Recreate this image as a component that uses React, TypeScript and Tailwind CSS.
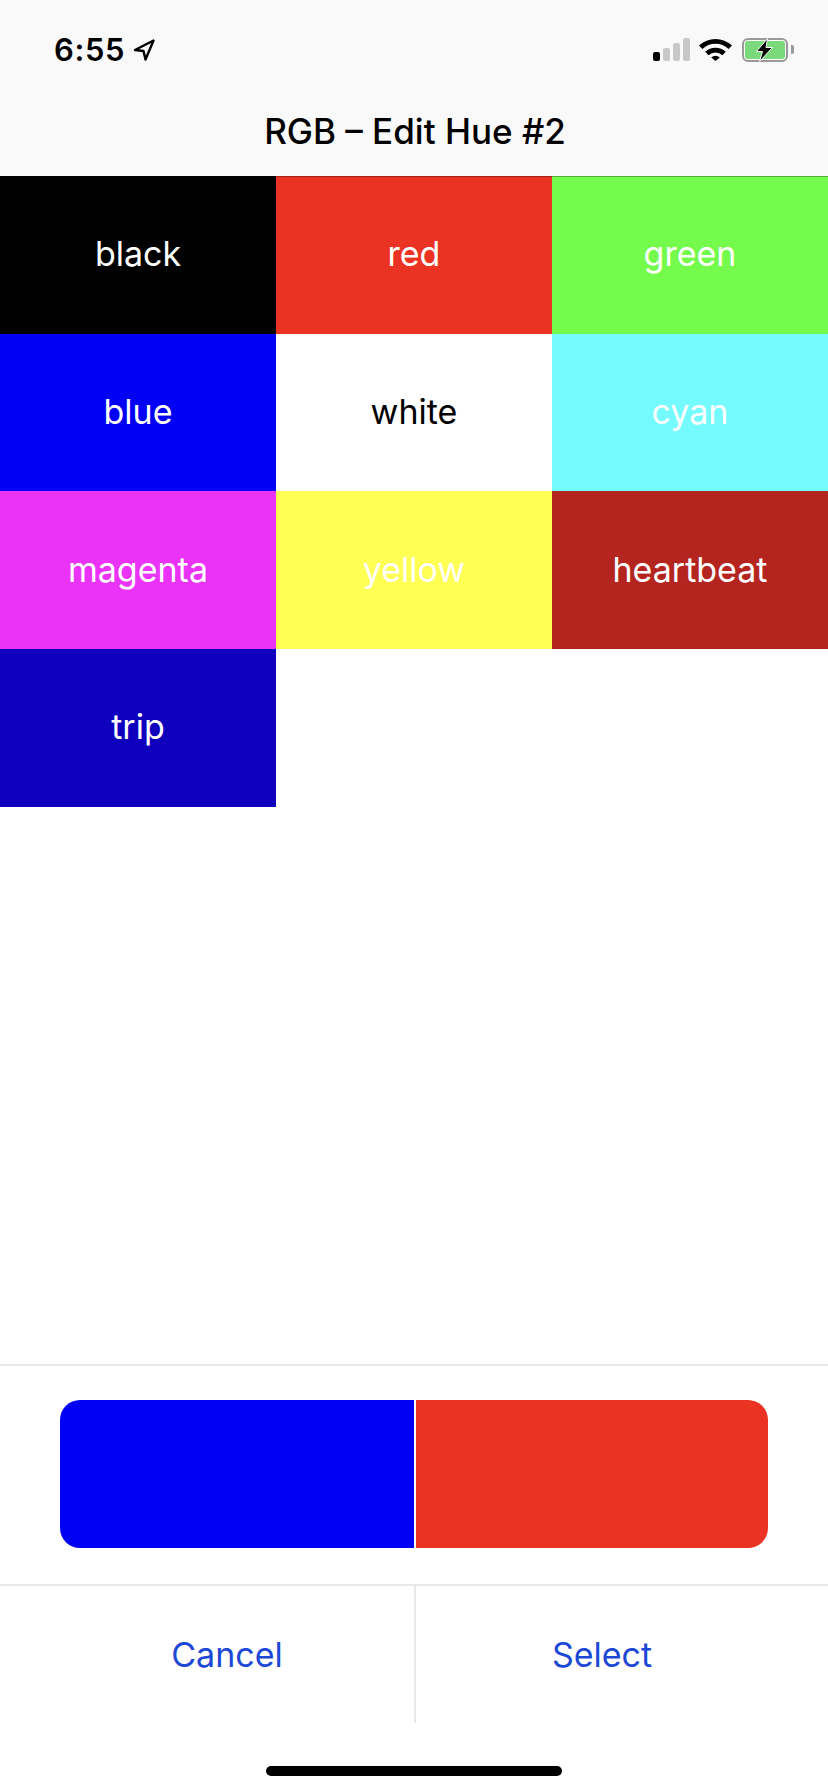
const swatches = [
  { name: "black", bg: "bg-black", text: "text-white" },
  { name: "red", bg: "bg-[#eb3323]", text: "text-white" },
  { name: "green", bg: "bg-[#75fb4c]", text: "text-white" },
  { name: "blue", bg: "bg-[#0000f5]", text: "text-white" },
  { name: "white", bg: "bg-white", text: "text-black" },
  { name: "cyan", bg: "bg-[#75fbfd]", text: "text-white" },
  { name: "magenta", bg: "bg-[#ea33f7]", text: "text-white" },
  { name: "yellow", bg: "bg-[#ffff54]", text: "text-white" },
  { name: "heartbeat", bg: "bg-[#b5251f]", text: "text-white" },
  { name: "trip", bg: "bg-[#0f00bd]", text: "text-white" },
];

const StatusBar = () => (
  <div className="flex h-[88px] items-center justify-between pl-[54px] pr-[34px] pt-[11px]">
    <div className="flex items-center gap-[8px]">
      <span className="text-[31px] font-semibold leading-none tracking-[0.6px] text-black">6:55</span>
      <svg width="22" height="22" viewBox="0 0 22 22" fill="none" stroke="black" strokeWidth="2.4" strokeLinejoin="round">
        <path d="M20.5 1.5 L2 11 L10.5 12 L12.5 20.5 Z" />
      </svg>
    </div>
    <div className="flex items-center">
      <div className="flex items-end gap-[3px]">
        <div className="h-[9px] w-[7px] rounded-[2px] bg-black" />
        <div className="h-[13px] w-[7px] rounded-[2px] bg-[#c8c8c8]" />
        <div className="h-[18px] w-[7px] rounded-[2px] bg-[#c8c8c8]" />
        <div className="h-[23px] w-[7px] rounded-[2px] bg-[#c8c8c8]" />
      </div>
      <svg width="33" height="23" viewBox="0 0 33 23" className="ml-[9px]">
        <path d="M0 7.5 A24 24 0 0 1 33 7.5 L29.6 11 A19 19 0 0 0 3.4 11 Z" fill="black" />
        <path d="M6.2 13.8 A15 15 0 0 1 26.8 13.8 L23.4 17.2 A10 10 0 0 0 9.6 17.2 Z" fill="black" />
        <path d="M12.2 19.4 A6.5 6.5 0 0 1 20.8 19.4 L16.5 23 Z" fill="black" />
      </svg>
      <div className="relative ml-[10px] flex items-center">
        <div className="h-[24px] w-[46px] rounded-[6px] border-2 border-[#9a9a9a] p-[1px]">
          <div className="h-full w-full rounded-[3px] bg-[#7ad97a]" />
        </div>
        <div className="ml-[3px] h-[9px] w-[3px] rounded-r-[2px] bg-[#9a9a9a]" />
        <svg width="19" height="24" viewBox="0 0 19 24" className="absolute left-[13px] top-0">
          <path d="M12.5 0.5 L1.5 13.5 H7.5 L4.5 23.5 L17.5 9.5 H11 Z" fill="black" stroke="#f9f9f9" strokeWidth="1" />
        </svg>
      </div>
    </div>
  </div>
);

export default function App() {
  return (
    <div className="flex h-[1792px] w-[828px] flex-col bg-white font-['Inter','Liberation_Sans',sans-serif]">
      <div className="h-[176px] shrink-0 bg-[#f9f9f9]">
        <StatusBar />
        <div className="flex h-[87px] items-center justify-center pl-[2px] text-[35px] font-medium text-black">
          RGB – Edit Hue #2
        </div>
      </div>

      <div className="relative h-[1188px] shrink-0">
        <div className="grid auto-rows-[157.67px] grid-cols-3">
          {swatches.map((s) => (
            <div key={s.name} className={`flex items-center justify-center pb-[2px] text-[34px] ${s.bg} ${s.text}`}>
              {s.name}
            </div>
          ))}
        </div>
        {/* nav bar hairline sits over the cells */}
        <div className="absolute inset-x-0 top-0 h-px bg-black/30" />
      </div>

      <div className="h-[220px] shrink-0 border-t-2 border-[#e8e8e8] px-[60px] pt-[34px]">
        <div className="flex h-[148px] gap-[2px] overflow-hidden rounded-[20px]">
          <div className="w-[354px] bg-[#0000f5]" />
          <div className="flex-1 bg-[#eb3323]" />
        </div>
      </div>

      <div className="flex h-[139px] shrink-0 border-t-2 border-[#e8e8e8] px-[40px]">
        <div className="flex w-[376px] items-center justify-center border-r-2 border-[#e8e8e8] text-[34px] text-[#1d48d6]">Cancel</div>
        <div className="flex flex-1 items-center justify-center text-[34px] text-[#1d48d6]">Select</div>
      </div>

      <div className="flex flex-1 items-start justify-center pt-[43px]">
        <div className="h-[10px] w-[296px] rounded-full bg-black" />
      </div>
    </div>
  );
}
